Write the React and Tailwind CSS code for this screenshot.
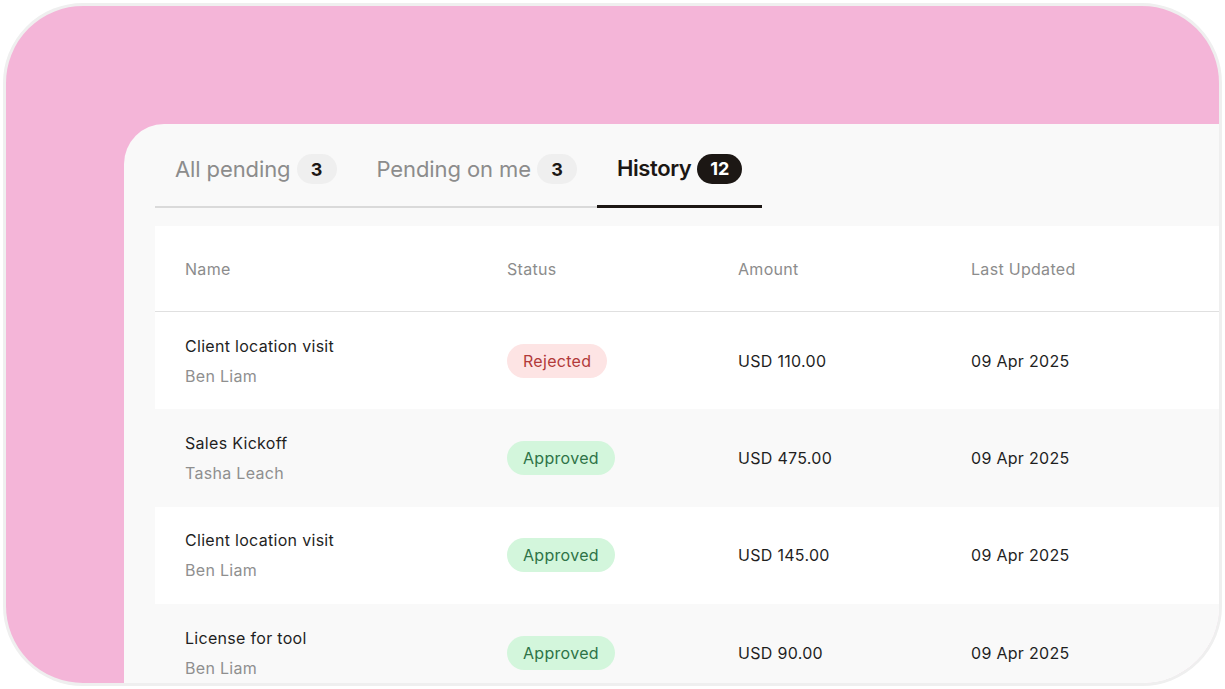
import React from "react";

const rows = [
  { title: "Client location visit", who: "Ben Liam", status: "Rejected", amount: "USD 110.00", date: "09 Apr 2025" },
  { title: "Sales Kickoff", who: "Tasha Leach", status: "Approved", amount: "USD 475.00", date: "09 Apr 2025" },
  { title: "Client location visit", who: "Ben Liam", status: "Approved", amount: "USD 145.00", date: "09 Apr 2025" },
  { title: "License for tool", who: "Ben Liam", status: "Approved", amount: "USD 90.00", date: "09 Apr 2025" },
];

function Tab({ label, count, active }) {
  return (
    <div className={"flex items-center gap-[6px] px-5 pt-[8px] h-[84px] " + (active ? "border-b-[3px] border-[#1c1714]" : "border-b-2 border-[#dadada]")}>
      <span className={active ? "text-[22px] font-semibold text-[#1c1714] tracking-[-0.4px]" : "text-[22px] text-[#8c8c8c] tracking-[-0.1px]"}>{label}</span>
      <span
        className={
          "h-[30px] rounded-full flex items-center justify-center text-[18px] font-bold " +
          (active ? "bg-[#1c1714] text-white px-[13px]" : "bg-[#efefef] text-[#1c1714] w-[40px]")
        }
      >
        {count}
      </span>
    </div>
  );
}

function Status({ s }) {
  const rej = s === "Rejected";
  return (
    <span
      className={
        "inline-flex items-center h-[34px] px-[16px] rounded-full text-[16px] tracking-[0.3px] " +
        (rej ? "bg-[#fde4e4] text-[#b23a3a]" : "bg-[#d3f6dc] text-[#2e7347]")
      }
    >
      {s}
    </span>
  );
}

export default function App() {
  return (
    <div className="w-[1225px] h-[689px] bg-white p-[3px]" style={{ fontFamily: "Inter, 'Open Sans', sans-serif" }}>
      <div className="w-full h-full rounded-[80px] border-[3px] border-[#efefef] bg-[#f4b5d8] overflow-hidden flex flex-col pt-[118px] pl-[118px]">
        <div className="flex-1 bg-[#f9f9f9] rounded-tl-[40px] pl-[31px] flex flex-col overflow-hidden">
          <div className="flex items-end h-[84px]">
            <Tab label="All pending" count="3" />
            <Tab label="Pending on me" count="3" />
            <Tab label="History" count="12" active />
          </div>
          <div className="mt-[18px] bg-white flex-1">
            <div className="grid grid-cols-[322px_231px_233px_1fr] h-[86px] items-center border-b border-[#e0e0e0] text-[16px] text-[#8c8c8c] tracking-[0.3px]">
              <div className="pl-[30px]">Name</div>
              <div className="pl-[30px]">Status</div>
              <div className="pl-[30px]">Amount</div>
              <div className="pl-[30px]">Last Updated</div>
            </div>
            {rows.map((r, i) => (
              <div
                key={i}
                className={"grid grid-cols-[322px_231px_233px_1fr] h-[97.4px] items-center tracking-[0.3px] " + (i % 2 === 1 ? "bg-[#f9f9f9]" : "bg-white")}
              >
                <div className="pl-[30px] flex flex-col gap-[6px]">
                  <span className="text-[16px] text-[#1f1f1f] leading-6">{r.title}</span>
                  <span className="text-[16px] text-[#8f8f8f] leading-6">{r.who}</span>
                </div>
                <div className="pl-[30px]">
                  <Status s={r.status} />
                </div>
                <div className="pl-[30px] text-[16px] text-[#1f1f1f]">{r.amount}</div>
                <div className="pl-[30px] text-[16px] text-[#1f1f1f]">{r.date}</div>
              </div>
            ))}
          </div>
        </div>
      </div>
    </div>
  );
}
